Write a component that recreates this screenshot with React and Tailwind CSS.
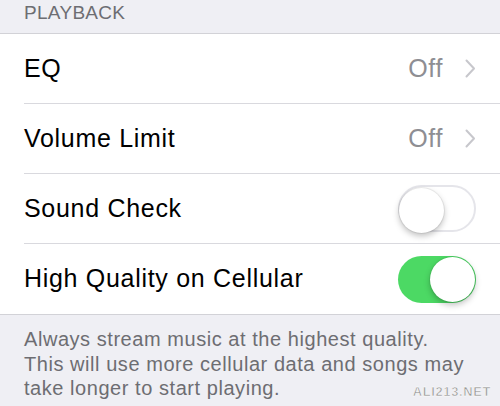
export default function App() {
  const font = { fontFamily: '"Liberation Sans", Arial, sans-serif' };
  const Chevron = () => (
    <svg width="11" height="19" viewBox="0 0 11 19" className="ml-[22px]">
      <path d="M1.5 1.5 L9 9.5 L1.5 17.5" fill="none" stroke="#c7c7cc" strokeWidth="2" strokeLinecap="round" strokeLinejoin="round" />
    </svg>
  );
  const Switch = ({ on }) => (
    <div
      className={`relative w-[78px] h-[47px] rounded-full ${on ? 'bg-[#4cd964]' : 'bg-white border-2 border-[#e5e5ea]'}`}
    >
      <div
        className={`absolute top-[1px] ${on ? 'right-[1px]' : 'left-[-1px] top-[-1px]'} w-[45px] h-[45px] rounded-full bg-white shadow-[0_3px_6px_rgba(0,0,0,0.25),0_0_0_1px_rgba(0,0,0,0.06)]`}
      />
    </div>
  );
  const Row = ({ label, right, last }) => (
    <div className="flex h-[70px] pl-6">
      <div className={`flex flex-1 items-center pr-6 ${last ? '' : 'border-b border-[#d9d9de]'}`}>
        <span className="text-[25px] text-black flex-1 tracking-[0.7px]">{label}</span>
        {right}
      </div>
    </div>
  );
  return (
    <div className="w-[500px] h-[406px] bg-[#efeff4] overflow-hidden relative" style={font}>
      <div className="h-[34px] border-b border-[#d2d2d7] pl-6 pt-[2px] text-[19px] text-[#6d6d72] tracking-[0.3px] leading-[22px]">
        PLAYBACK
      </div>
      <div className="bg-white border-b border-[#d2d2d7]">
        <Row label="EQ" right={<div className="flex items-center"><span className="text-[25px] text-[#8e8e93] tracking-[0.6px]">Off</span><Chevron /></div>} />
        <Row label="Volume Limit" right={<div className="flex items-center"><span className="text-[25px] text-[#8e8e93] tracking-[0.6px]">Off</span><Chevron /></div>} />
        <Row label="Sound Check" right={<Switch on={false} />} />
        <Row label="High Quality on Cellular" right={<Switch on />} last />
      </div>
      <div className="pl-6 pt-[12px] text-[20px] leading-[24.5px] text-[#6d6d72] tracking-[0.55px]">
        <div>Always stream music at the highest quality.</div>
        <div>This will use more cellular data and songs may</div>
        <div>take longer to start playing.</div>
      </div>
      <div className="absolute right-[9px] bottom-[7px] text-[13px] leading-[14px] font-bold text-[#999999] tracking-[0.6px]" style={{ WebkitTextStroke: '0.5px #ffffff' }}>
        ALI213.NET
      </div>
    </div>
  );
}
